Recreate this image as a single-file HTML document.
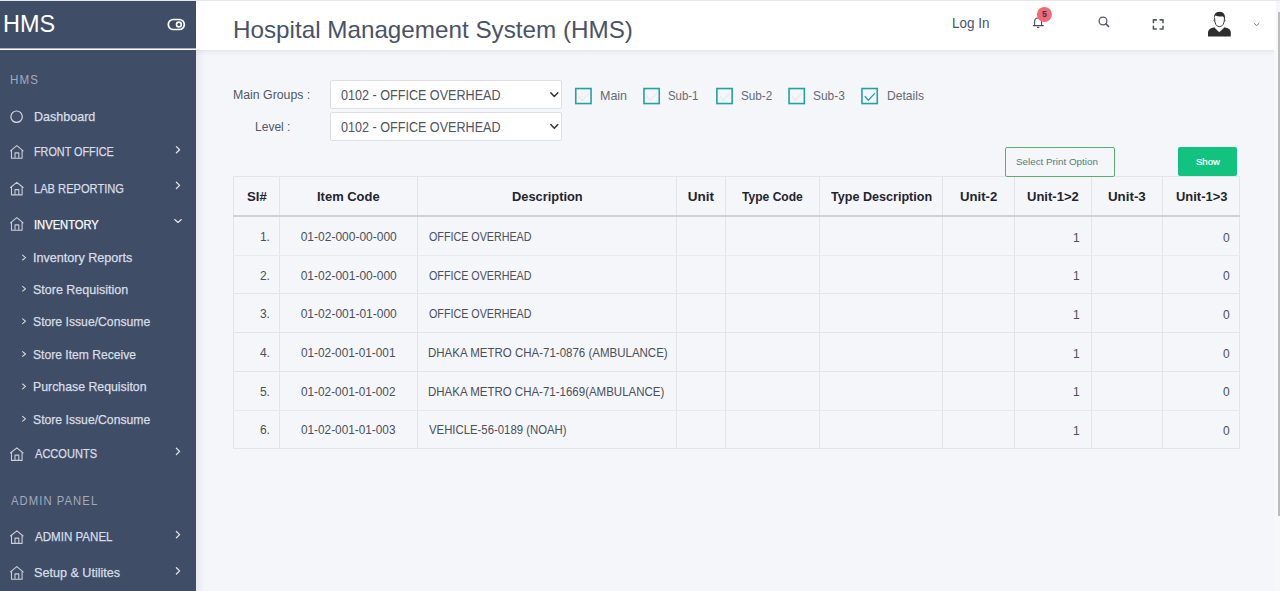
<!DOCTYPE html>
<html><head><meta charset="utf-8">
<style>
*{box-sizing:border-box;margin:0;padding:0}
html,body{width:1280px;height:591px;overflow:hidden}
body{font-family:"Liberation Sans",sans-serif;background:#f4f6fa;position:relative;color:#333}
.tx{position:absolute;white-space:nowrap;transform-origin:0 0}
.r{position:absolute}
#topline{left:0;top:0;width:1280px;height:1px;background:#e6e7ea}
#sb{left:0;top:1px;width:196px;height:590px;background:#3f4d67}
#sbl1{left:0;top:48px;width:196px;height:1px;background:rgba(255,255,255,0.55)}
#sbl2{left:0;top:49px;width:196px;height:1px;background:#fff}
#topbar{left:196px;top:1px;width:1080px;height:49px;background:#fff}
#shadow{left:196px;top:50px;width:1080px;height:6px;background:linear-gradient(rgba(40,50,70,0.085) 0px,rgba(40,50,70,0.04) 2px,rgba(40,50,70,0) 6px)}
#sbshadow{left:196px;top:50px;width:9px;height:541px;background:linear-gradient(90deg,rgba(40,50,70,0.07),rgba(40,50,70,0.035) 45%,rgba(40,50,70,0))}
#track{left:1274px;top:50px;width:6px;height:541px;background:#f7f8fa}
#thumb{left:1278px;top:12px;width:2px;height:504px;background:#bcbcbc}
.sel{position:absolute;left:330px;width:232px;height:29px;background:#fff;border:1px solid #dcdfe4;border-radius:2px}
.cb{position:absolute;top:88px;width:17px;height:17px;border:2px solid #1f9fa6;border-radius:1px}
.vl{position:absolute;top:176px;width:1px;height:272px;background:#e1e4e9}
.hl{position:absolute;left:233px;width:1007px;height:1px;background:#e1e4e9}
</style></head><body>
<div class="r" id="topline"></div>
<div class="r" id="sb"></div>
<div class="r" id="sbl1"></div>
<div class="r" id="sbl2"></div>
<div class="r" id="topbar"></div>
<div class="r" id="shadow"></div>
<div class="r" id="sbshadow"></div>
<div class="r" id="track"></div>
<div class="r" id="thumb"></div>

<!-- sidebar icons -->
<svg class="r" style="left:0;top:0" width="196" height="591" viewBox="0 0 196 591">
  <!-- toggle -->
  <rect x="168.3" y="19.5" width="16" height="10" rx="5" ry="5" fill="none" stroke="#fff" stroke-width="1.7"/>
  <circle cx="178.9" cy="24.5" r="2.4" fill="none" stroke="#fff" stroke-width="1.6"/>
  <!-- dashboard circle -->
  <circle cx="16.6" cy="116.7" r="5.7" fill="none" stroke="#d6dae2" stroke-width="1.2"/>
  <g fill="none" stroke="#c9ced8" stroke-width="1.1" stroke-linejoin="round" stroke-linecap="round">
    <g id="home" transform="translate(0,0)">
      <path d="M10.5 150.8 L16.8 145.6 L23.1 150.8 M11.5 150 V158.2 H22.1 V150 M15 158.2 V152.9 H18.8 V158.2"/>
    </g>
    <use href="#home" transform="translate(0,36.7)"/>
    <use href="#home" transform="translate(0,72)"/>
    <use href="#home" transform="translate(0,302.2)"/>
    <use href="#home" transform="translate(0,385.2)"/>
    <use href="#home" transform="translate(0,421)"/>
  </g>
  <g fill="none" stroke="#dfe3ea" stroke-width="1.3" stroke-linecap="round" stroke-linejoin="round">
    <path id="chr" d="M176.4 146.6 L179.6 149.7 L176.4 152.8"/>
    <use href="#chr" transform="translate(0,35.7)"/>
    <use href="#chr" transform="translate(0,301.7)"/>
    <use href="#chr" transform="translate(0,384.9)"/>
    <use href="#chr" transform="translate(0,421.2)"/>
    <path d="M174.7 219.6 L178 222.4 L181.3 219.6"/>
  </g>
  <g fill="none" stroke="#d6dae2" stroke-width="1.1" stroke-linecap="round" stroke-linejoin="round">
    <path id="sch" d="M22.6 255.2 L25.5 257.6 L22.6 260"/>
    <use href="#sch" transform="translate(0,31.2)"/>
    <use href="#sch" transform="translate(0,63.6)"/>
    <use href="#sch" transform="translate(0,96.4)"/>
    <use href="#sch" transform="translate(0,128.8)"/>
    <use href="#sch" transform="translate(0,161.2)"/>
  </g>
</svg>

<!-- topbar icons -->
<svg class="r" style="left:1020px;top:0" width="250" height="50" viewBox="1020 0 250 50">
  <!-- bell -->
  <g fill="none" stroke="#474c57" stroke-width="1.1" stroke-linecap="round">
    <path d="M1034.6 25 V21.5 A3.5 3.5 0 0 1 1041.6 21.5 V25"/>
    <path d="M1033.3 25.6 H1043.3"/>
    <path d="M1037.6 27.4 H1038.8"/>
  </g>
  <circle cx="1044.4" cy="14.4" r="7.5" fill="#f26874"/>
  <text x="1044.3" y="17" font-family="Liberation Sans" font-weight="700" font-size="8.5" text-anchor="middle" fill="#2f3a52">5</text>
  <!-- search -->
  <circle cx="1103" cy="21" r="3.9" fill="none" stroke="#565b65" stroke-width="1.3"/>
  <path d="M1105.9 23.9 L1108.5 26.4" stroke="#50555f" stroke-width="1.5" stroke-linecap="round"/>
  <!-- fullscreen -->
  <g fill="none" stroke="#545964" stroke-width="1.6" stroke-linecap="round" stroke-linejoin="round">
    <path d="M1153.4 22.6 V19.9 H1156.4 M1160.1 19.9 H1163 V22.6 M1163 26.3 V29 H1160.1 M1156.4 29 H1153.4 V26.3"/>
  </g>
  <!-- avatar -->
  <path d="M1208 36.6 V32 Q1208.3 29.3 1211 28.3 L1214.3 27.2 Q1216.5 29.5 1219.3 32.3 Q1222 29.5 1224.3 27.2 L1227.8 28.3 Q1230.6 29.3 1230.8 32 V36.6 Z" fill="#2e2e2e"/>
  <path d="M1214.6 27.8 L1219.3 31.6 L1224 27.8" fill="none" stroke="#c8c8c8" stroke-width="0.5"/>
  <path d="M1214.6 17.8 Q1214.6 26.6 1219.4 26.7 Q1224.4 26.6 1224.5 17.8" fill="none" stroke="#2e2e2e" stroke-width="0.9"/>
  <path d="M1214.3 19.5 Q1213.4 20.3 1214.6 21.6 M1224.6 19.5 Q1225.6 20.3 1224.5 21.6" fill="none" stroke="#2e2e2e" stroke-width="0.8"/>
  <path d="M1214 19.2 Q1213.2 11.8 1219.5 11.7 Q1225.8 11.9 1225 19.4 Q1224.2 17 1222.6 16.2 Q1219 17.2 1215.5 15.6 Q1214.4 17 1214 19.2 Z" fill="#2e2e2e"/>
  <!-- chevron -->
  <path d="M1254.2 23.4 L1256.6 25.6 L1259 23.4" fill="none" stroke="#777" stroke-width="1" stroke-linecap="round"/>
</svg>

<!-- selects -->
<div class="sel" style="top:80px"></div>
<div class="sel" style="top:112px"></div>
<svg class="r" style="left:545px;top:85px" width="20" height="50" viewBox="545 85 20 50">
  <g fill="none" stroke="#333" stroke-width="1.5" stroke-linecap="round" stroke-linejoin="round">
    <path d="M550.8 92.8 L554.3 96.5 L557.8 92.8"/>
    <path d="M550.8 124.5 L554.3 128.2 L557.8 124.5"/>
  </g>
</svg>

<!-- checkboxes -->
<svg class="r" style="left:570px;top:85px" width="320" height="25" viewBox="570 85 320 25">
<g fill="none" stroke="#24a0a6" stroke-width="1.6"><rect x="575.75" y="88.55" width="15.3" height="15" /><rect x="643.95" y="88.55" width="15.3" height="15" /><rect x="716.85" y="88.55" width="15.3" height="15" /><rect x="789.05" y="88.55" width="15.3" height="15" /><rect x="861.95" y="88.55" width="15.3" height="15" /></g>
  <g fill="none" stroke="#e6e8eb" stroke-width="1.2">
    <path d="M579 96.5 L582.3 100.4 L588.7 93.4"/>
    <path d="M647 96.5 L650.3 100.4 L656.7 93.4"/>
    <path d="M720 96.5 L723.3 100.4 L729.7 93.4"/>
    <path d="M792 96.5 L795.3 100.4 L801.7 93.4"/>
  </g>
  <path d="M865.1 96.5 L868.4 100.2 L874.7 93.4" fill="none" stroke="#2aa0a6" stroke-width="1.3" stroke-linecap="round"/>
</svg>

<!-- table -->
<div class="r" style="left:233px;top:176px;width:1007px;height:273px;border:1px solid #e1e4e9"></div>
<div class="vl" style="left:279px"></div>
<div class="vl" style="left:417px"></div>
<div class="vl" style="left:676px"></div>
<div class="vl" style="left:725px"></div>
<div class="vl" style="left:819px"></div>
<div class="vl" style="left:942px"></div>
<div class="vl" style="left:1014px"></div>
<div class="vl" style="left:1091px"></div>
<div class="vl" style="left:1162px"></div>
<div class="hl" style="top:215px;height:2px;background:#cfd2d7"></div>
<div class="hl" style="top:255px;background:#e8eaee"></div>
<div class="hl" style="top:293px"></div>
<div class="hl" style="top:332px"></div>
<div class="hl" style="top:371px"></div>
<div class="hl" style="top:410px;background:#e8eaee"></div>

<!-- buttons -->
<div class="r" style="left:1005px;top:147px;width:110px;height:30px;border:1px solid #5fab74;border-radius:2px"></div>
<div class="r" style="left:1178px;top:147px;width:59px;height:29px;background:#12c27f;border-radius:2px"></div>

<div class="tx" style="left:3.09px;top:12.08px;font-size:24.5px;line-height:24.5px;color:#fff;font-weight:400;letter-spacing:0px;transform:scaleX(0.9569);">HMS</div>
<div class="tx" style="left:10.37px;top:74.20px;font-size:12.5px;line-height:12.5px;color:#a3abba;font-weight:400;letter-spacing:1.2px;transform:scaleX(0.9276);">HMS</div>
<div class="tx" style="left:34.04px;top:109.92px;font-size:13px;line-height:13px;color:#d9dee6;font-weight:400;letter-spacing:0px;transform:scaleX(0.9645);-webkit-text-stroke:0.25px #d9dee6;">Dashboard</div>
<div class="tx" style="left:34.27px;top:145.22px;font-size:13px;line-height:13px;color:#d9dee6;font-weight:400;letter-spacing:0px;transform:scaleX(0.8316);-webkit-text-stroke:0.25px #d9dee6;">FRONT OFFICE</div>
<div class="tx" style="left:34.24px;top:182.12px;font-size:13px;line-height:13px;color:#d9dee6;font-weight:400;letter-spacing:0px;transform:scaleX(0.8553);-webkit-text-stroke:0.25px #d9dee6;">LAB REPORTING</div>
<div class="tx" style="left:33.84px;top:217.82px;font-size:13px;line-height:13px;color:#ffffff;font-weight:400;letter-spacing:0px;transform:scaleX(0.8595);-webkit-text-stroke:0.25px #ffffff;">INVENTORY</div>
<div class="tx" style="left:33.13px;top:251.32px;font-size:13px;line-height:13px;color:#d9dee6;font-weight:400;letter-spacing:0px;transform:scaleX(0.9673);-webkit-text-stroke:0.25px #d9dee6;">Inventory Reports</div>
<div class="tx" style="left:33.14px;top:282.52px;font-size:13px;line-height:13px;color:#d9dee6;font-weight:400;letter-spacing:0px;transform:scaleX(0.9608);-webkit-text-stroke:0.25px #d9dee6;">Store Requisition</div>
<div class="tx" style="left:32.76px;top:314.92px;font-size:13px;line-height:13px;color:#d9dee6;font-weight:400;letter-spacing:0px;transform:scaleX(0.9379);-webkit-text-stroke:0.25px #d9dee6;">Store Issue/Consume</div>
<div class="tx" style="left:32.77px;top:347.72px;font-size:13px;line-height:13px;color:#d9dee6;font-weight:400;letter-spacing:0px;transform:scaleX(0.9312);-webkit-text-stroke:0.25px #d9dee6;">Store Item Receive</div>
<div class="tx" style="left:32.75px;top:380.12px;font-size:13px;line-height:13px;color:#d9dee6;font-weight:400;letter-spacing:0px;transform:scaleX(0.9466);-webkit-text-stroke:0.25px #d9dee6;">Purchase Requisiton</div>
<div class="tx" style="left:32.76px;top:412.52px;font-size:13px;line-height:13px;color:#d9dee6;font-weight:400;letter-spacing:0px;transform:scaleX(0.9379);-webkit-text-stroke:0.25px #d9dee6;">Store Issue/Consume</div>
<div class="tx" style="left:34.50px;top:447.42px;font-size:13px;line-height:13px;color:#d9dee6;font-weight:400;letter-spacing:0px;transform:scaleX(0.8507);-webkit-text-stroke:0.25px #d9dee6;">ACCOUNTS</div>
<div class="tx" style="left:10.70px;top:495.30px;font-size:12.5px;line-height:12.5px;color:#a3abba;font-weight:400;letter-spacing:1.2px;transform:scaleX(0.8990);">ADMIN PANEL</div>
<div class="tx" style="left:34.50px;top:529.92px;font-size:13px;line-height:13px;color:#d9dee6;font-weight:400;letter-spacing:0px;transform:scaleX(0.8897);-webkit-text-stroke:0.25px #d9dee6;">ADMIN PANEL</div>
<div class="tx" style="left:33.53px;top:565.62px;font-size:13px;line-height:13px;color:#d9dee6;font-weight:400;letter-spacing:0px;transform:scaleX(0.9690);-webkit-text-stroke:0.25px #d9dee6;">Setup &amp; Utilites</div>
<div class="tx" style="left:232.98px;top:18.36px;font-size:24px;line-height:24px;color:#4a5366;font-weight:400;letter-spacing:0px;transform:scaleX(1.0094);">Hospital Management System (HMS)</div>
<div class="tx" style="left:952.27px;top:16.28px;font-size:14.5px;line-height:14.5px;color:#4a5366;font-weight:400;letter-spacing:0px;transform:scaleX(0.9308);">Log In</div>
<div class="tx" style="left:233.32px;top:89.20px;font-size:12.5px;line-height:12.5px;color:#505665;font-weight:400;letter-spacing:0px;transform:scaleX(0.9844);">Main Groups :</div>
<div class="tx" style="left:254.54px;top:121.10px;font-size:12.5px;line-height:12.5px;color:#505665;font-weight:400;letter-spacing:0px;transform:scaleX(0.9629);">Level :</div>
<div class="tx" style="left:341.30px;top:87.96px;font-size:14px;line-height:14px;color:#50555f;font-weight:400;letter-spacing:0px;transform:scaleX(0.8994);">0102 - OFFICE OVERHEAD</div>
<div class="tx" style="left:341.30px;top:119.56px;font-size:14px;line-height:14px;color:#50555f;font-weight:400;letter-spacing:0px;transform:scaleX(0.8994);">0102 - OFFICE OVERHEAD</div>
<div class="tx" style="left:600.28px;top:89.14px;font-size:13.5px;line-height:13.5px;color:#656a74;font-weight:400;letter-spacing:0px;transform:scaleX(0.9250);">Main</div>
<div class="tx" style="left:668.15px;top:89.14px;font-size:13.5px;line-height:13.5px;color:#656a74;font-weight:400;letter-spacing:0px;transform:scaleX(0.8457);">Sub-1</div>
<div class="tx" style="left:741.13px;top:89.14px;font-size:13.5px;line-height:13.5px;color:#656a74;font-weight:400;letter-spacing:0px;transform:scaleX(0.8686);">Sub-2</div>
<div class="tx" style="left:813.32px;top:89.14px;font-size:13.5px;line-height:13.5px;color:#656a74;font-weight:400;letter-spacing:0px;transform:scaleX(0.8829);">Sub-3</div>
<div class="tx" style="left:886.70px;top:89.44px;font-size:13.5px;line-height:13.5px;color:#656a74;font-weight:400;letter-spacing:0px;transform:scaleX(0.8975);">Details</div>
<div class="tx" style="left:1016.47px;top:156.78px;font-size:9.5px;line-height:9.5px;color:#4f7f78;font-weight:400;letter-spacing:0px;transform:scaleX(1.0333);">Select Print Option</div>
<div class="tx" style="left:1195.84px;top:157.76px;font-size:9px;line-height:9px;color:#ffffff;font-weight:400;letter-spacing:0px;transform:scaleX(1.0591);-webkit-text-stroke:0.2px #fff;">Show</div>
<div class="tx" style="left:246.53px;top:189.64px;font-size:13.5px;line-height:13.5px;color:#1f2430;font-weight:700;letter-spacing:0px;transform:scaleX(0.9737);">Sl#</div>
<div class="tx" style="left:316.84px;top:189.64px;font-size:13.5px;line-height:13.5px;color:#1f2430;font-weight:700;letter-spacing:0px;transform:scaleX(0.9602);">Item Code</div>
<div class="tx" style="left:511.55px;top:189.64px;font-size:13.5px;line-height:13.5px;color:#1f2430;font-weight:700;letter-spacing:0px;transform:scaleX(0.9521);">Description</div>
<div class="tx" style="left:687.75px;top:189.64px;font-size:13.5px;line-height:13.5px;color:#1f2430;font-weight:700;letter-spacing:0px;">Unit</div>
<div class="tx" style="left:742.30px;top:189.64px;font-size:13.5px;line-height:13.5px;color:#1f2430;font-weight:700;letter-spacing:0px;transform:scaleX(0.8941);">Type Code</div>
<div class="tx" style="left:831.10px;top:189.64px;font-size:13.5px;line-height:13.5px;color:#1f2430;font-weight:700;letter-spacing:0px;transform:scaleX(0.9324);">Type Description</div>
<div class="tx" style="left:959.62px;top:189.64px;font-size:13.5px;line-height:13.5px;color:#1f2430;font-weight:700;letter-spacing:0px;transform:scaleX(0.9757);">Unit-2</div>
<div class="tx" style="left:1026.93px;top:189.64px;font-size:13.5px;line-height:13.5px;color:#1f2430;font-weight:700;letter-spacing:0px;transform:scaleX(0.9654);">Unit-1&gt;2</div>
<div class="tx" style="left:1108.01px;top:189.64px;font-size:13.5px;line-height:13.5px;color:#1f2430;font-weight:700;letter-spacing:0px;transform:scaleX(0.9865);">Unit-3</div>
<div class="tx" style="left:1175.84px;top:189.64px;font-size:13.5px;line-height:13.5px;color:#1f2430;font-weight:700;letter-spacing:0px;transform:scaleX(0.9577);">Unit-1&gt;3</div>
<div class="tx" style="left:259.90px;top:231.28px;font-size:12px;line-height:12px;color:#4a4f5a;font-weight:400;letter-spacing:0px;">1.</div>
<div class="tx" style="left:300.70px;top:231.28px;font-size:12px;line-height:12px;color:#4a4f5a;font-weight:400;letter-spacing:0px;">01-02-000-00-000</div>
<div class="tx" style="left:428.60px;top:231.28px;font-size:12px;line-height:12px;color:#4a4f5a;font-weight:400;letter-spacing:0px;transform:scaleX(0.8939);">OFFICE OVERHEAD</div>
<div class="tx" style="left:1073.10px;top:231.58px;font-size:12px;line-height:12px;color:#4a4f5a;font-weight:400;letter-spacing:0px;">1</div>
<div class="tx" style="left:1222.90px;top:231.58px;font-size:12px;line-height:12px;color:#4a4f5a;font-weight:400;letter-spacing:0px;">0</div>
<div class="tx" style="left:259.90px;top:269.98px;font-size:12px;line-height:12px;color:#4a4f5a;font-weight:400;letter-spacing:0px;">2.</div>
<div class="tx" style="left:300.70px;top:269.98px;font-size:12px;line-height:12px;color:#4a4f5a;font-weight:400;letter-spacing:0px;">01-02-001-00-000</div>
<div class="tx" style="left:428.60px;top:269.98px;font-size:12px;line-height:12px;color:#4a4f5a;font-weight:400;letter-spacing:0px;transform:scaleX(0.8939);">OFFICE OVERHEAD</div>
<div class="tx" style="left:1073.10px;top:270.28px;font-size:12px;line-height:12px;color:#4a4f5a;font-weight:400;letter-spacing:0px;">1</div>
<div class="tx" style="left:1222.90px;top:270.28px;font-size:12px;line-height:12px;color:#4a4f5a;font-weight:400;letter-spacing:0px;">0</div>
<div class="tx" style="left:259.90px;top:308.48px;font-size:12px;line-height:12px;color:#4a4f5a;font-weight:400;letter-spacing:0px;">3.</div>
<div class="tx" style="left:300.70px;top:308.48px;font-size:12px;line-height:12px;color:#4a4f5a;font-weight:400;letter-spacing:0px;">01-02-001-01-000</div>
<div class="tx" style="left:428.60px;top:308.48px;font-size:12px;line-height:12px;color:#4a4f5a;font-weight:400;letter-spacing:0px;transform:scaleX(0.8939);">OFFICE OVERHEAD</div>
<div class="tx" style="left:1073.10px;top:308.78px;font-size:12px;line-height:12px;color:#4a4f5a;font-weight:400;letter-spacing:0px;">1</div>
<div class="tx" style="left:1222.90px;top:308.78px;font-size:12px;line-height:12px;color:#4a4f5a;font-weight:400;letter-spacing:0px;">0</div>
<div class="tx" style="left:259.90px;top:347.38px;font-size:12px;line-height:12px;color:#4a4f5a;font-weight:400;letter-spacing:0px;">4.</div>
<div class="tx" style="left:300.70px;top:347.38px;font-size:12px;line-height:12px;color:#4a4f5a;font-weight:400;letter-spacing:0px;transform:scaleX(0.9833);">01-02-001-01-001</div>
<div class="tx" style="left:427.64px;top:347.38px;font-size:12px;line-height:12px;color:#4a4f5a;font-weight:400;letter-spacing:0px;transform:scaleX(0.9585);">DHAKA METRO CHA-71-0876 (AMBULANCE)</div>
<div class="tx" style="left:1073.10px;top:347.68px;font-size:12px;line-height:12px;color:#4a4f5a;font-weight:400;letter-spacing:0px;">1</div>
<div class="tx" style="left:1222.90px;top:347.68px;font-size:12px;line-height:12px;color:#4a4f5a;font-weight:400;letter-spacing:0px;">0</div>
<div class="tx" style="left:259.90px;top:386.18px;font-size:12px;line-height:12px;color:#4a4f5a;font-weight:400;letter-spacing:0px;">5.</div>
<div class="tx" style="left:300.70px;top:386.18px;font-size:12px;line-height:12px;color:#4a4f5a;font-weight:400;letter-spacing:0px;transform:scaleX(0.9833);">01-02-001-01-002</div>
<div class="tx" style="left:427.64px;top:386.18px;font-size:12px;line-height:12px;color:#4a4f5a;font-weight:400;letter-spacing:0px;transform:scaleX(0.9578);">DHAKA METRO CHA-71-1669(AMBULANCE)</div>
<div class="tx" style="left:1073.10px;top:386.48px;font-size:12px;line-height:12px;color:#4a4f5a;font-weight:400;letter-spacing:0px;">1</div>
<div class="tx" style="left:1222.90px;top:386.48px;font-size:12px;line-height:12px;color:#4a4f5a;font-weight:400;letter-spacing:0px;">0</div>
<div class="tx" style="left:259.90px;top:424.28px;font-size:12px;line-height:12px;color:#4a4f5a;font-weight:400;letter-spacing:0px;">6.</div>
<div class="tx" style="left:300.70px;top:424.28px;font-size:12px;line-height:12px;color:#4a4f5a;font-weight:400;letter-spacing:0px;transform:scaleX(0.9833);">01-02-001-01-003</div>
<div class="tx" style="left:428.60px;top:424.28px;font-size:12px;line-height:12px;color:#4a4f5a;font-weight:400;letter-spacing:0px;transform:scaleX(0.9459);">VEHICLE-56-0189 (NOAH)</div>
<div class="tx" style="left:1073.10px;top:424.58px;font-size:12px;line-height:12px;color:#4a4f5a;font-weight:400;letter-spacing:0px;">1</div>
<div class="tx" style="left:1222.90px;top:424.58px;font-size:12px;line-height:12px;color:#4a4f5a;font-weight:400;letter-spacing:0px;">0</div>
</body></html>
